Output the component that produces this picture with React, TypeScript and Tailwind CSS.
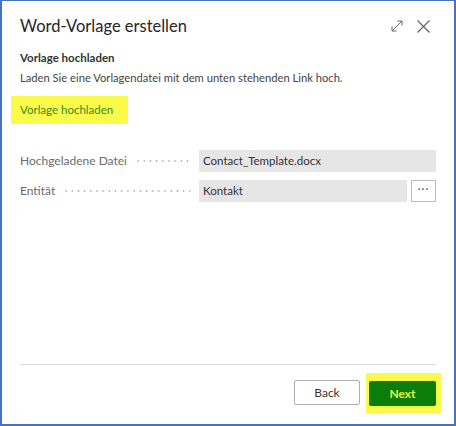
import React from 'react';

const font = { fontFamily: 'Lato, "Noto Sans", sans-serif' };

const Leader = () => (
  <div className="flex-1 ml-[8px] mr-[4px] bg-[radial-gradient(circle,#b4b4b4_0.8px,transparent_1.1px)] bg-[length:6.2px_2px] bg-repeat-x h-[2px]" />
);

const FieldRow = ({ label, value, lookup }: { label: string; value: string; lookup?: boolean }) => (
  <div className="flex items-center h-[22px]">
    <div className="flex items-center w-[179px] pr-[2px]">
      <span className="text-[12px] text-[#6b6b6b] whitespace-nowrap">{label}</span>
      <Leader />
    </div>
    <div className="flex flex-1 gap-[4px] h-full">
      <div className="flex-1 bg-[#e6e6e6] flex items-center px-[4px] text-[11.5px] text-[#333]">
        {value}
      </div>
      {lookup && (
        <button className="w-[25px] h-full border border-[#bdbdbd] bg-white flex items-center justify-center text-[#555] text-[11px] tracking-[1px] pb-[3px]">
          ···
        </button>
      )}
    </div>
  </div>
);

export default function App() {
  return (
    <div
      className="w-[456px] h-[426px] bg-white border-[#4472c4] border-t border-l-2 border-r-2 border-b-2 flex flex-col"
      style={font}
    >
      {/* Kopfzeile */}
      <div className="flex items-center justify-between pl-[18px] pr-[24px] pt-[13px]">
        <h1 className="text-[16.5px] text-[#262626]">Word-Vorlage erstellen</h1>
        <div className="flex items-center gap-[14px] text-[#666]">
          <svg width="12" height="12" viewBox="0 0 12 12" fill="none" stroke="currentColor" strokeWidth="1">
            <path d="M1 11 L11 1 M6.5 1 H11 V5.5 M1 6.5 V11 H5.5" />
          </svg>
          <svg width="13" height="13" viewBox="0 0 13 13" fill="none" stroke="currentColor" strokeWidth="1.2">
            <path d="M0.5 0.5 L12.5 12.5 M12.5 0.5 L0.5 12.5" />
          </svg>
        </div>
      </div>

      <div className="px-[18px] pt-[10px]">
        <h2 className="text-[11.5px] font-bold text-[#333]">Vorlage hochladen</h2>
        <p className="text-[11.2px] text-[#444] mt-[4px]">
          Laden Sie eine Vorlagendatei mit dem unten stehenden Link hoch.
        </p>
      </div>

      <div className="pl-[9px] pt-[9px]">
        <div className="w-[117px] h-[28px] bg-[#fafa4a] flex items-center pl-[9px]">
          <span className="text-[11.5px] text-[#3a8a1e]">Vorlage hochladen</span>
        </div>
      </div>

      <div className="px-[18px] pt-[26px] flex flex-col gap-[8px]">
        <FieldRow label="Hochgeladene Datei" value="Contact_Template.docx" />
        <FieldRow label="Entität" value="Kontakt" lookup />
      </div>

      <div className="flex-1" />

      {/* Fußzeile */}
      <div className="mx-[18px] border-t border-[#dcdcdc] flex justify-end items-center gap-[6px] pt-[8px] pb-[11px]">
        <button className="w-[66px] h-[25px] border border-[#adadad] rounded-[2px] bg-white text-[12px] text-[#333]">
          Back
        </button>
        <div className="bg-[#fafa4a] p-[3px] py-[7px] -mr-[5px] pr-[5px]">
          <button className="w-[67px] h-[25px] rounded-[2px] bg-[#0a7d0a] text-[12px] font-bold text-[#e8f540]">
            Next
          </button>
        </div>
      </div>
    </div>
  );
}
